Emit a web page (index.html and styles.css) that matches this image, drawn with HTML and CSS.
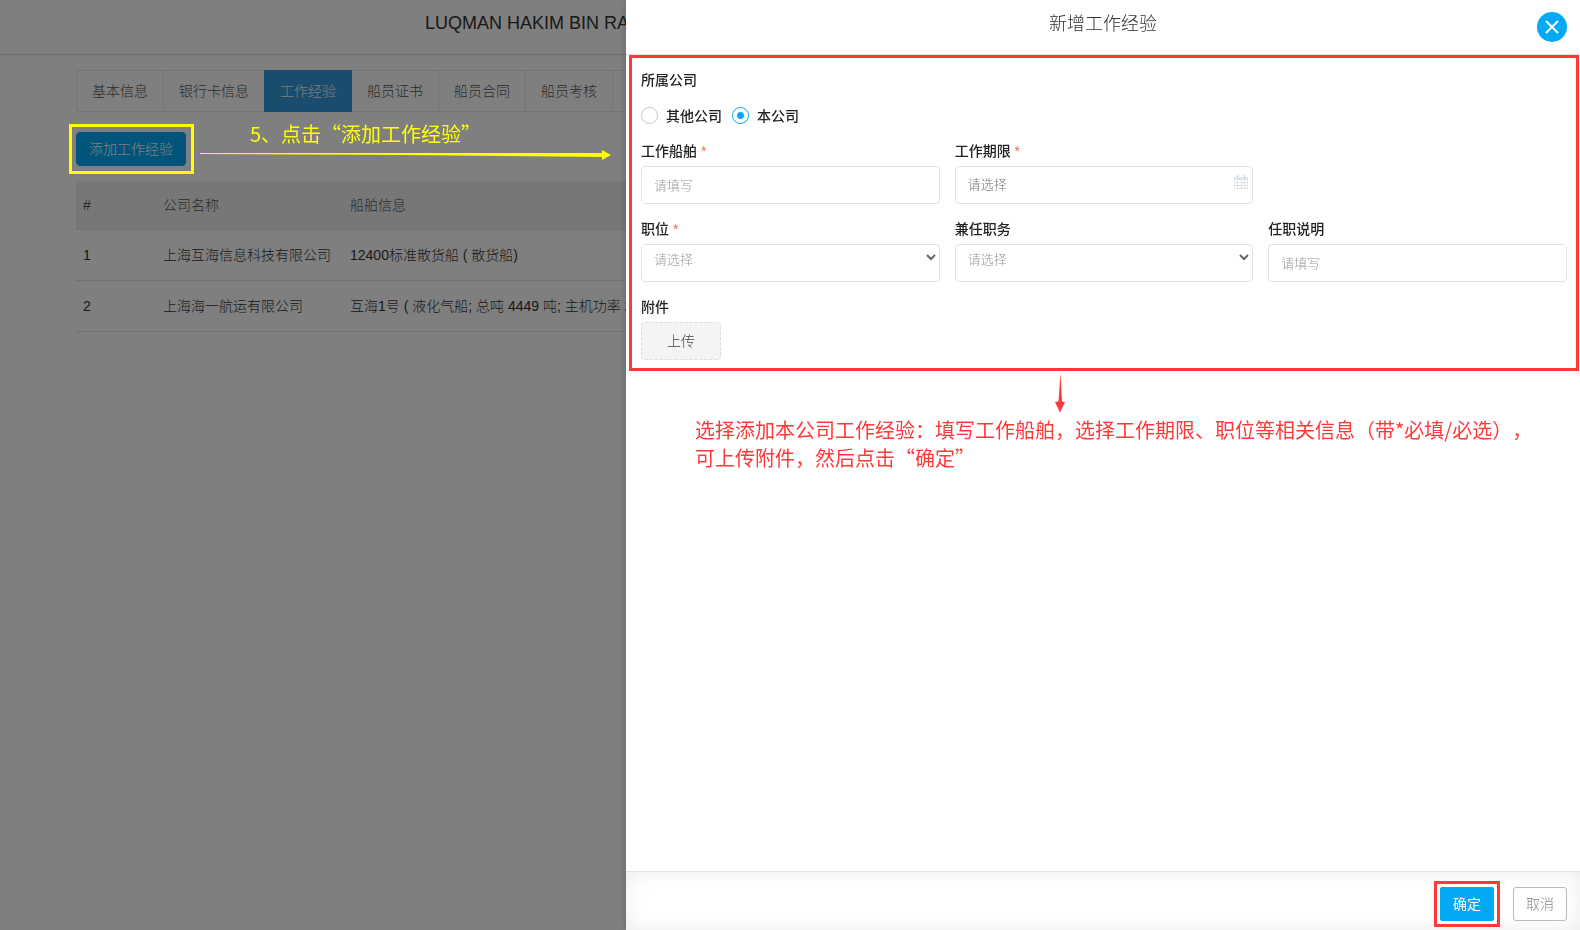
FILE: index.html
```html
<!DOCTYPE html>
<html lang="zh-CN">
<head>
<meta charset="utf-8">
<title>新增工作经验</title>
<link rel="stylesheet" href="styles.css">
</head>
<body>
<div class="page">
  <header class="page-header"><h1 class="page-title">LUQMAN HAKIM BIN RA</h1></header>
  <main class="page-main">
    <nav class="tabs">
      <a class="tab" href="#">基本信息</a>
      <a class="tab" href="#">银行卡信息</a>
      <a class="tab tab-active" href="#">工作经验</a>
      <a class="tab" href="#">船员证书</a>
      <a class="tab" href="#">船员合同</a>
      <a class="tab" href="#">船员考核</a>
      <a class="tab" href="#" aria-label="更多"></a>
    </nav>
    <button class="btn btn-primary add-btn" type="button">添加工作经验</button>
    <table class="records">
      <thead>
        <tr><th class="col-index">#</th><th class="col-company">公司名称</th><th>船舶信息</th></tr>
      </thead>
      <tbody>
        <tr><td>1</td><td>上海互海信息科技有限公司</td><td>12400标准散货船 ( 散货船)</td></tr>
        <tr><td>2</td><td>上海海一航运有限公司</td><td>互海1号 ( 液化气船; 总吨 4449 吨; 主机功率 2</td></tr>
      </tbody>
    </table>
  </main>
</div>

<div class="backdrop"></div>

<div class="step-note">
  <div class="step-frame"></div>
  <p class="step-text">5、点击“添加工作经验”</p>
  <svg class="step-arrow" width="412" height="12" viewBox="0 0 412 12" aria-hidden="true">
    <path d="M0 4 L402 4 V1 L411 6 L402 11 V8 L200 6 L0 5 Z" fill="#ff0"/>
  </svg>
</div>

<aside class="drawer">
  <header class="drawer-header">
    <h2 class="drawer-title">新增工作经验</h2>
    <button class="close-btn" type="button" aria-label="关闭">
      <svg width="14" height="14" viewBox="0 0 14 14" aria-hidden="true"><path d="M1 1 L13 13 M13 1 L1 13" fill="none" stroke="#fff" stroke-width="2"/></svg>
    </button>
  </header>
  <div class="drawer-body">
    <form class="form" id="work-form">
      <fieldset class="company">
        <legend class="label">所属公司</legend>
        <div class="radios">
          <label class="radio"><input type="radio" name="company">其他公司</label>
          <label class="radio"><input type="radio" name="company" checked>本公司</label>
        </div>
      </fieldset>
      <div class="row">
        <div class="field">
          <label class="label" for="ship">工作船舶 <span class="required">*</span></label>
          <input class="control" id="ship" type="text" placeholder="请填写">
        </div>
        <div class="field">
          <label class="label" for="period">工作期限 <span class="required">*</span></label>
          <div class="control-wrap">
            <input class="control control-date" id="period" type="text" placeholder="请选择">
            <svg class="calendar" width="14" height="14" viewBox="0 0 14 14" aria-hidden="true">
              <path d="M0 2h2V1a1 1 0 0 1 1-1h1a1 1 0 0 1 1 1v1h4V1a1 1 0 0 1 1-1h1a1 1 0 0 1 1 1v1h2v12H0Z" fill="#e1e5e8"/>
              <path d="M1 5h2v2H1zM4 5h3v2H4zM8 5h2v2H8zM11 5h2v2h-2zM1 8h2v2H1zM4 8h3v2H4zM8 8h2v2H8zM11 8h2v2h-2zM1 11h2v2H1zM4 11h3v2H4zM8 11h2v2H8zM11 11h2v2h-2z" fill="#fff"/>
            </svg>
          </div>
        </div>
      </div>
      <div class="row">
        <div class="field">
          <label class="label" for="rank">职位 <span class="required">*</span></label>
          <div class="control-wrap">
            <select class="control control-select" id="rank"><option>请选择</option></select>
            <svg class="chevron" width="10" height="7" viewBox="0 0 10 7" aria-hidden="true"><path d="M1 1 L5 5 L9 1" fill="none" stroke="#666" stroke-width="2"/></svg>
          </div>
        </div>
        <div class="field">
          <label class="label" for="duty">兼任职务</label>
          <div class="control-wrap">
            <select class="control control-select" id="duty"><option>请选择</option></select>
            <svg class="chevron" width="10" height="7" viewBox="0 0 10 7" aria-hidden="true"><path d="M1 1 L5 5 L9 1" fill="none" stroke="#666" stroke-width="2"/></svg>
          </div>
        </div>
        <div class="field">
          <label class="label" for="remark">任职说明</label>
          <input class="control" id="remark" type="text" placeholder="请填写">
        </div>
      </div>
      <div class="field">
        <label class="label" for="upload">附件</label>
        <button class="upload-btn" id="upload" type="button">上传</button>
      </div>
    </form>
    <div class="form-note">
      <svg class="note-arrow" width="10" height="40" viewBox="0 0 10 40" aria-hidden="true"><path d="M5.500 0 L7 28.500 L10 29 L5 39.500 L0 29 L3.500 28.500 Z" fill="#ff3838"/></svg>
      <p class="note-text">选择添加本公司工作经验：填写工作船舶，选择工作期限、职位等相关信息（带*必填/必选），<br>可上传附件，然后点击“确定”</p>
    </div>
  </div>
  <footer class="drawer-footer">
    <div class="confirm-frame"><button class="btn btn-primary" type="submit" form="work-form">确定</button></div>
    <button class="btn btn-outline" type="button">取消</button>
  </footer>
</aside>
</body>
</html>
```
FILE: styles.css
```css
* { box-sizing: border-box; }

body {
  margin: 0;
  height: 100vh;
  overflow: hidden;
  background: #fff;
  color: #333;
  font: 300 14px/20px "Liberation Sans", "Noto Sans CJK SC", sans-serif;
}

h1, h2, p { margin: 0; font-weight: 300; }
button, input, select { font: inherit; }

.page-header {
  height: 55px;
  padding: 11px 0 0 425px;
  border-bottom: 1px solid #dcdcdc;
}
.page-title { font-size: 18px; line-height: 24px; white-space: nowrap; }
.page-main { padding: 15px 76px 0; }

.tabs { display: flex; }
.tab {
  min-width: 88px;
  height: 42px;
  margin-right: -1px;
  padding: 0 15px;
  border: 1px solid #e9e9e9;
  color: #555;
  line-height: 40px;
  text-decoration: none;
  white-space: nowrap;
}
.tab-active { position: relative; border-color: #3498db; background: #3498db; color: #fff; }

.btn {
  height: 34px;
  padding: 0 12px;
  border: 1px solid #03a9f4;
  border-radius: 4px;
  line-height: 32px;
  white-space: nowrap;
}
.btn-primary { background: #03a9f4; color: #fff; }
.btn-outline { border-color: #bbb; border-radius: 3px; background: #fff; color: #888; }
.add-btn { display: block; margin-top: 20px; }

.records { width: 100%; margin-top: 15px; border-collapse: collapse; table-layout: fixed; }
.records th, .records td {
  height: 51px;
  padding: 0 7px;
  border-bottom: 1px solid #e4e4e4;
  font-weight: 300;
  text-align: left;
  white-space: nowrap;
}
.records th { height: 48px; background: #eee; color: #555; }
.records .col-index { width: 80px; }
.records .col-company { width: 187px; }

.backdrop { position: fixed; inset: 0; background: rgba(0, 0, 0, .5); }

.step-note { position: absolute; top: 124px; left: 69px; }
.step-frame { width: 125px; height: 50px; border: 3px solid #ff0; }
.step-text {
  position: absolute;
  top: -4px;
  left: 181px;
  color: #ff0;
  font: 400 20px/28px "Noto Sans CJK SC", sans-serif;
  white-space: nowrap;
}
.step-arrow { position: absolute; top: 25px; left: 131px; }

.drawer {
  position: fixed;
  inset: 0 0 0 auto;
  display: flex;
  flex-direction: column;
  width: calc(60% + 6px);
  background: #fff;
  box-shadow: 0 0 8px rgba(0, 0, 0, .2);
}
.drawer-header { position: relative; height: 55px; padding-top: 12px; border-bottom: 1px solid #ddd; }
.drawer-title { color: #333; font-size: 18px; line-height: 24px; text-align: center; }
.close-btn {
  position: absolute;
  top: 12px;
  right: 13px;
  display: grid;
  place-items: center;
  width: 30px;
  height: 30px;
  padding: 0;
  border: 0;
  border-radius: 50%;
  background: #03a9f4;
}

.drawer-body { flex: 1; }
.form {
  display: grid;
  gap: 15px;
  margin: 0 1px 0 3px;
  padding: 12px 9px 8px;
  border: 3px solid #ff3838;
}
.company { min-width: 0; margin: 0; padding: 0; border: 0; }
.label { display: block; padding: 0; color: #222; font-weight: 500; }
.required { color: #f0694c; font-weight: 300; }
.radios { display: flex; gap: 10px; height: 21px; margin-top: 15px; }
.radio { display: flex; align-items: center; gap: 8px; color: #222; font-weight: 500; }
.radio input {
  appearance: none;
  width: 17px;
  height: 17px;
  margin: 0;
  border: 1px solid #c8c9cc;
  border-radius: 50%;
}
.radio input:checked {
  border-color: #03a9f4;
  background: radial-gradient(circle, #03a9f4 3px, #fff 4px);
}

.row { display: grid; grid-template-columns: repeat(3, 1fr); gap: 15px; }
.field { display: grid; gap: 5px; justify-items: start; min-width: 0; }
.control-wrap { position: relative; width: 100%; }
.control {
  display: block;
  width: 100%;
  height: 38px;
  padding: 0 12px;
  border: 1px solid #e4e4e4;
  border-radius: 4px;
  background: #fff;
  font-size: 13px;
}
.control::placeholder { color: #999; opacity: 1; }
.control-date::placeholder { color: #777; }
.control-date { padding-bottom: 2px; }
.control-select { appearance: none; padding-bottom: 6px; color: #999; }
.calendar { position: absolute; top: 9px; right: 5px; }
.chevron { position: absolute; top: 10px; right: 4px; pointer-events: none; }

.upload-btn {
  width: 80px;
  height: 38px;
  padding: 0;
  border: 1px dashed #ddd;
  border-radius: 4px;
  background: #f4f4f4;
  color: #444;
}

.form-note { display: grid; gap: 3px; padding: 2px 0 0 69px; }
.note-arrow { margin-left: 360px; }
.note-text {
  color: #ff3838;
  font: 400 20px/28px "Noto Sans CJK SC", sans-serif;
  text-spacing-trim: space-all;
  white-space: nowrap;
}

.drawer-footer {
  display: flex;
  justify-content: flex-end;
  align-items: center;
  gap: 13px;
  height: 59px;
  padding: 5px 13px 0 0;
  border-top: 1px solid #e4e4e4;
  box-shadow: inset 0 0 20px rgba(0, 0, 0, .08);
}
.confirm-frame { padding: 3px; border: 3px solid #ff3838; background: #fff; }
.confirm-frame .btn { display: block; border-radius: 2px; font-weight: 400; }
```
